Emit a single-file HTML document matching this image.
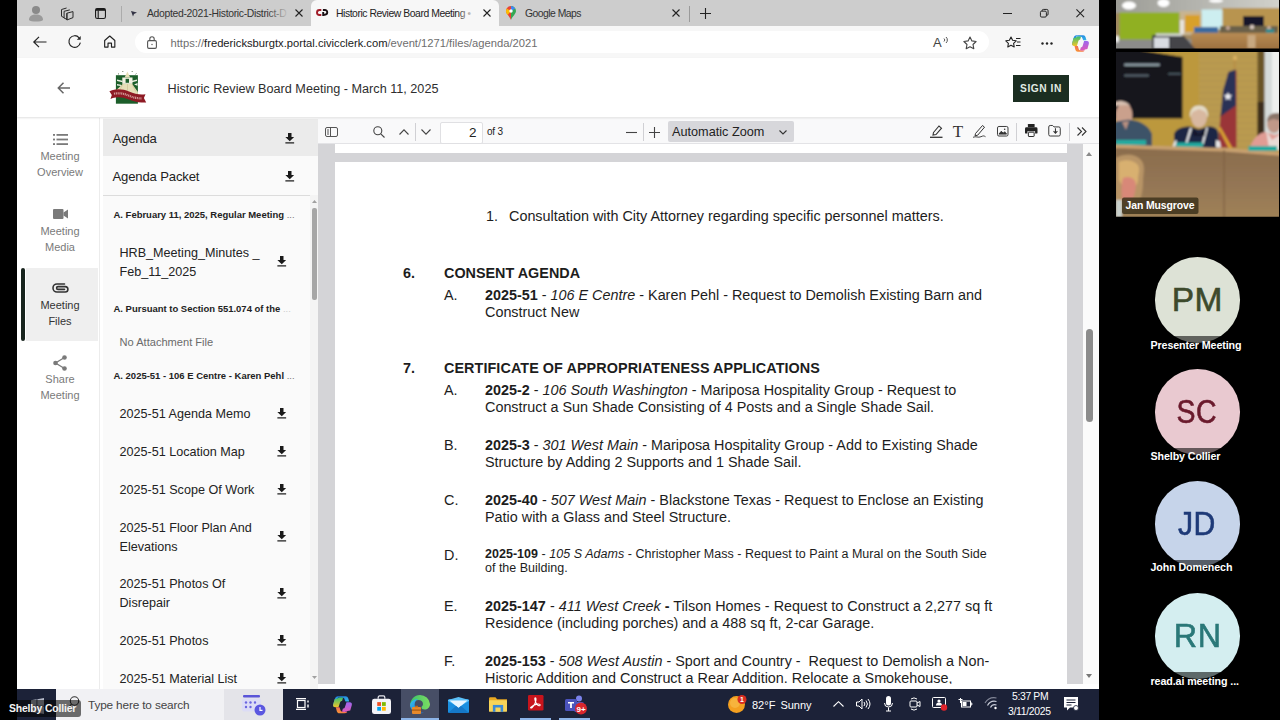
<!DOCTYPE html>
<html lang="en">
<head>
<meta charset="utf-8">
<title>Historic Review Board Meeting</title>
<style>
*{box-sizing:border-box;margin:0;padding:0}
html,body{width:1280px;height:720px;overflow:hidden;background:#000;font-family:"Liberation Sans",sans-serif;color:#222}
.abs{position:absolute}
#win{position:absolute;left:17px;top:0;width:1082px;height:690px;background:#fff;overflow:hidden}
#tabbar{position:absolute;left:0;top:0;width:1083px;height:26px;background:#cdcdcd}
#addr{position:absolute;left:0;top:26px;width:1083px;height:32px;background:#f7f7f7}
#hdr{position:absolute;left:0;top:58px;width:1083px;height:59px;background:#fff;box-shadow:0 1px 2px rgba(0,0,0,.13);z-index:2}
#nav{position:absolute;left:0;top:118px;width:86px;height:572px;background:#fff}
#files{position:absolute;left:86px;top:118px;width:215px;height:572px;background:#fafafa}
#pdf{position:absolute;left:301px;top:118px;width:782px;height:572px;background:#d4d4d7}
#task{position:absolute;left:17px;top:688.500px;width:1082px;height:31.500px;background:#1c2238;overflow:hidden}
.tk{position:absolute;color:#fff;white-space:nowrap;font-size:11px;line-height:14px}
#right{position:absolute;left:1100px;top:0;width:180px;height:720px;background:#000}
.t{position:absolute;white-space:nowrap}
.av{position:absolute;left:54.500px;width:85.500px;height:85.500px;border-radius:50%;text-align:center;font-size:33.5px;line-height:86px;-webkit-text-stroke:.6px;letter-spacing:.5px}
.avg{position:absolute;left:40px;width:120px;height:9px;background:rgba(0,0,0,.56)}
.av span{display:inline-block}
.avn{position:absolute;left:50.500px;color:#fff;font-weight:bold;font-size:10.7px;line-height:13px;white-space:nowrap;letter-spacing:-.1px}

.nv{position:absolute;left:0;width:86px;text-align:center;font-size:11px;line-height:16px;color:#7a7a7a}
#navact{position:absolute;left:9px;top:150px;width:72px;height:73px;background:#efefef}
#navbar{position:absolute;left:4px;top:150px;width:4px;height:73px;background:#18241e;border-radius:2px}
#navline{position:absolute;left:82px;top:0;width:1px;height:572px;background:#ececec}
.fr{position:absolute;left:9.500px;font-size:13.1px;letter-spacing:-.15px;line-height:18px;color:#222;white-space:nowrap}
.fh{position:absolute;left:10.500px;font-size:9.47px;line-height:12px;font-weight:bold;color:#222;white-space:nowrap}
.fi{position:absolute;left:16.500px;font-size:12.6px;line-height:19px;color:#222;white-space:nowrap}
.dl{width:9.500px;height:10.500px;margin:.9px 0 0 .6px}

.tabt{position:absolute;top:7px;font-size:10.4px;line-height:13px;letter-spacing:-.15px;color:#333;white-space:nowrap}
#acttab{position:absolute;left:294px;top:0;width:188px;height:26px;background:#f7f7f7;border-radius:6px 6px 0 0}
#urlpill{position:absolute;left:118px;top:4.500px;width:854px;height:22.700px;border-radius:12px;background:#fff}
#url{position:absolute;left:153.500px;top:9.800px;font-size:11.2px;line-height:15px;color:#6e6e6e;white-space:nowrap}
#url b{font-weight:normal;color:#1a1a1a}
svg{position:absolute;overflow:visible}
#title{position:absolute;left:150.500px;top:22.500px;font-size:12.65px;line-height:16px;color:#2e2e2e;white-space:nowrap}
#signin{position:absolute;left:996px;top:17px;width:56px;height:27px;background:#1b2e21;color:#e2ece4;font-weight:bold;font-size:10.2px;line-height:27px;text-align:center;letter-spacing:.55px}

#pdftb{position:absolute;left:0;top:0;width:782px;height:26px;background:#f9f9fa;border-bottom:1px solid #e3e3e6}
#pg{position:absolute;left:17px;top:43.500px;width:732px;height:540px;background:#fff}
#pgshadow{position:absolute;left:17px;top:26px;width:732px;height:9px;background:#fff}
#vscroll{position:absolute;left:765px;top:26px;width:17px;height:546px;background:#fbfbfb}
#vthumb{position:absolute;left:3px;top:185px;width:7px;height:93px;background:#8c8c8c;border-radius:4px}
.p{position:absolute;white-space:nowrap;font-size:14.38px;line-height:17px;color:#1d1d1d}
.p b{font-weight:bold}
.p.s{font-size:12.5px;line-height:15px}

</style>
</head>
<body>
<div id="win">
  <div id="tabbar">
    <!-- profile -->
    <svg style="left:11px;top:5px" width="16" height="18" viewBox="0 0 16 18"><circle cx="8" cy="5" r="4" fill="#8a8a8a"/><path d="M1 15c0-4 3-5.5 7-5.500s7 1.500 7 5.500c-1.500 2-12.500 2-14 0z" fill="#9a9a9a"/></svg>
    <!-- workspaces -->
    <svg style="left:43.500px;top:6.500px" width="13" height="14" viewBox="0 0 13 14" fill="none" stroke="#2a2a2a" stroke-width="1" stroke-linejoin="round"><path d="M5.900 6.200L12 4.600v6L5.900 13z"/><path d="M5.900 6.200L5.900 13"/><path d="M8.800 2.900L3.100 4.300v6.800l2.800 1.200"/><path d="M5.600 1L.5 2.500v6.800l2.600 1.400"/></svg>
    <!-- tab actions -->
    <svg style="left:77.700px;top:7.800px" width="11" height="11" viewBox="0 0 11 11" fill="none" stroke="#1a1a1a" stroke-width="1.100"><rect x=".55" y=".55" width="9.900" height="9.900" rx="1.800"/><path d="M.8 1.700h9.400" stroke-width="2.200"/><path d="M3.200 2.500v8"/></svg>
    <div style="position:absolute;left:104px;top:6px;width:1px;height:16px;background:#ababab"></div>
    <svg style="left:113px;top:9px" width="8" height="8" viewBox="0 0 8 8"><path d="M1 2l6 1.500-3 1.500-1 2.500z" fill="#334"/></svg>
    <div class="tabt" style="left:130px;letter-spacing:-.32px">Adopted-2021-Historic-District-D</div>
    <div style="position:absolute;left:250px;top:4px;width:22px;height:18px;background:linear-gradient(90deg,rgba(205,205,205,0),#cdcdcd)"></div>
    <svg style="left:278px;top:9px" width="8" height="8" viewBox="0 0 8 8" stroke="#222" stroke-width="1.100"><path d="M.5.500l7 7M7.500.500l-7 7"/></svg>
    <div id="acttab"></div>
    <!-- cp logo -->
    <svg style="left:298.700px;top:9.300px" width="12.300" height="7" viewBox="0 0 12.300 7" fill="none" stroke-width="1.900"><path d="M5.300 1H3.500a2.500 2.500 0 0 0 0 5h1.800" stroke="#a01c28"/><path d="M6.900 1h2a2.350 2.350 0 0 1 0 4.700h-1.500M7.200 3v4" stroke="#1a1014"/></svg>
    <div class="tabt" style="left:319px;color:#222;letter-spacing:-.45px">Historic Review Board Meeting &bull;</div>
    <div style="position:absolute;left:440px;top:4px;width:22px;height:18px;background:linear-gradient(90deg,rgba(247,247,247,0),#f7f7f7 80%)"></div>
    <svg style="left:466px;top:9px" width="8" height="8" viewBox="0 0 8 8" stroke="#222" stroke-width="1.100"><path d="M.5.500l7 7M7.500.500l-7 7"/></svg>
    <!-- google maps pin -->
    <svg style="left:489px;top:6px" width="10" height="14" viewBox="0 0 10 14"><path d="M5 0a5 5 0 0 1 5 5c0 3-3.500 5-5 9z" fill="#34a853"/><path d="M5 0a5 5 0 0 0-5 5c0 3 3.500 5 5 9z" fill="#ea4335"/><path d="M5 0a5 5 0 0 1 4.300 2.500L5 5z" fill="#4285f4"/><path d="M.7 2.500L5 5 1.500 9A6 6 0 0 1 .7 2.500z" fill="#fbbc04"/><circle cx="5" cy="5" r="1.700" fill="#fff"/></svg>
    <div class="tabt" style="left:508px;letter-spacing:-.53px">Google Maps</div>
    <svg style="left:655px;top:9px" width="8" height="8" viewBox="0 0 8 8" stroke="#222" stroke-width="1.100"><path d="M.5.500l7 7M7.500.500l-7 7"/></svg>
    <div style="position:absolute;left:672px;top:6px;width:1px;height:16px;background:#9a9a9a"></div>
    <svg style="left:683px;top:8px" width="11" height="11" viewBox="0 0 11 11" stroke="#222" stroke-width="1.100"><path d="M5.500 0v11M0 5.500h11"/></svg>
    <!-- window controls -->
    <svg style="left:985.500px;top:12.500px" width="9" height="1" viewBox="0 0 9 1"><path d="M0 .5h9" stroke="#222" stroke-width="1"/></svg>
    <svg style="left:1022.500px;top:9px" width="8.500" height="8.500" viewBox="0 0 10 10" fill="none" stroke="#222" stroke-width="1.150"><rect x=".5" y="2.500" width="7" height="7" rx="1.500"/><path d="M2.500 2.500V2a1.500 1.500 0 0 1 1.500-1.500h4A1.500 1.500 0 0 1 9.500 2v4A1.500 1.500 0 0 1 8 7.500h-.5"/></svg>
    <svg style="left:1058.800px;top:9px" width="8.500" height="8.500" viewBox="0 0 10 10" stroke="#222" stroke-width="1.250"><path d="M.5.500l9 9M9.500.500l-9 9"/></svg>
  </div>
  <div id="addr">
    <!-- back -->
    <svg style="left:16px;top:9.900px" width="14" height="12" viewBox="0 0 14 12" fill="none" stroke="#222" stroke-width="1.200"><path d="M13.500 6H1M6 .8L.8 6 6 11.200"/></svg>
    <!-- refresh -->
    <svg style="left:51px;top:9.100px" width="14" height="14" viewBox="0 0 14 14" fill="none" stroke="#222" stroke-width="1.150"><path d="M12.37 7.71A5.8 5.8 0 1 1 11.14 2.77"/><path d="M12.700 .9v3.900H8.800z" fill="#222" stroke="none"/></svg>
    <!-- home -->
    <svg style="left:87px;top:9.100px" width="11.500" height="13" viewBox="0 0 12 13" fill="none" stroke="#222" stroke-width="1.200" stroke-linejoin="round"><path d="M.7 5.500L6 .8l5.300 4.700v6.800H7.800V8.200H4.200v4.100H.7z"/></svg>
    <div id="urlpill"></div>
    <!-- lock -->
    <svg style="left:130px;top:9.7px" width="10" height="13" viewBox="0 0 10 13" fill="none" stroke="#555" stroke-width="1.100"><rect x=".6" y="4.600" width="8.800" height="7.800" rx="1.300"/><path d="M2.800 4.500V3a2.200 2.200 0 0 1 4.400 0v1.500"/><circle cx="5" cy="8.500" r=".7" fill="#555" stroke="none"/></svg>
    <div id="url">https://<b>fredericksburgtx.portal.civicclerk.com</b>/event/1271/files/agenda/2021</div>
    <!-- read aloud -->
    <div style="position:absolute;left:916px;top:8.700px;font-size:13px;line-height:16px;color:#444">A</div>
    <svg style="left:926px;top:9.7px" width="6" height="8" viewBox="0 0 6 8" fill="none" stroke="#444" stroke-width=".9"><path d="M1 2.500a2 2 0 0 1 0 3M3 1a4 4 0 0 1 0 6"/></svg>
    <!-- star -->
    <svg style="left:946px;top:9.7px" width="14" height="14" viewBox="0 0 14 14" fill="none" stroke="#444" stroke-width="1.100" stroke-linejoin="round"><path d="M7 1l1.900 3.900 4.200.6-3.100 3 .8 4.200L7 10.700l-3.800 2 .8-4.200-3.100-3 4.200-.6z"/></svg>
    <!-- favorites -->
    <svg style="left:988px;top:9.7px" width="16" height="14" viewBox="0 0 16 14" fill="none" stroke="#222" stroke-width="1.100" stroke-linejoin="round"><path d="M6 1l1.600 3.300 3.600.5-2.600 2.500.6 3.600L6 9.200l-3.200 1.700.6-3.600L.8 4.800l3.600-.5z"/><path d="M11 2.500h4.500M12 6h3.500M11 9.500h4.500"/></svg>
    <!-- dots -->
    <svg style="left:1024px;top:15.7px" width="12" height="3" viewBox="0 0 12 3" fill="#222"><circle cx="1.500" cy="1.500" r="1.200"/><circle cx="6" cy="1.500" r="1.200"/><circle cx="10.500" cy="1.500" r="1.200"/></svg>
    <!-- copilot -->
    <svg style="left:1055px;top:8.7px" width="17" height="17" viewBox="0 0 17 17"><defs><linearGradient id="cgA" x1="0" y1="0" x2="1" y2="1"><stop offset="0" stop-color="#1a78e0"/><stop offset="1" stop-color="#38b8e8"/></linearGradient><linearGradient id="cgB" x1="0" y1="0" x2="0" y2="1"><stop offset="0" stop-color="#38c070"/><stop offset="1" stop-color="#f0c428"/></linearGradient><linearGradient id="cgC" x1="0" y1="1" x2="1" y2="0"><stop offset="0" stop-color="#f8a028"/><stop offset="1" stop-color="#f04878"/></linearGradient><linearGradient id="cgD" x1="0" y1="0" x2="0" y2="1"><stop offset="0" stop-color="#9a68f0"/><stop offset="1" stop-color="#e058b8"/></linearGradient></defs>
      <path d="M4.200 1.500C4.800.7 5.600.3 6.600.3h4.600c1.300 0 2 .8 2.400 2l.9 3h-3.300l-1-2.500C9.900 2 9.400 1.700 8.600 1.700z" fill="url(#cgA)"/>
      <path d="M6.600.3C5.300.3 4.500 1.200 4.100 2.400L2 9.200C1.600 10.500 0 10.600 0 9l.1-.8L1.600 3C2 1.500 3 .3 4.600.3z" fill="url(#cgA)"/>
      <path d="M1.600 3L.2 8C-.3 9.800.6 10.900 2 10.900h2.900l1.400-4.600c.3-1 .9-1.500 1.800-1.500L9 1.700C8.400 1.700 5 1 4.100 2.400z" fill="url(#cgB)"/>
      <path d="M12.800 15.500c-.6.800-1.400 1.200-2.400 1.200H5.800c-1.300 0-2-.8-2.400-2l-.9-3.800h3.300l1 3.300c.3.800.8 1.100 1.600 1.100z" fill="url(#cgC)"/>
      <path d="M15.400 14l1.400-5c.5-1.800-.4-3-1.800-3h-2.900l-1.400 4.700c-.3 1-.9 1.500-1.800 1.500L8 15.300c.6 0 4 .7 4.900-.7z" fill="url(#cgD)"/>
    </svg>
  </div>
  <div id="hdr">
    <svg style="left:40px;top:24px" width="13" height="12" viewBox="0 0 13 12" fill="none" stroke="#666" stroke-width="1.500"><path d="M13 6H1.500M6.500 .8L1.300 6l5.200 5.200"/></svg>
    <!-- city logo -->
    <svg style="left:91px;top:8px" width="40" height="40" viewBox="0 0 40 40">
      <rect x="7.900" y="9.200" width="22" height="28.500" fill="#1c5e2a"/>
      <path d="M9 13.500l5.500 1.200v1.600L9 15zM29 13.500l-5 1.200v1.600l5-1.300zM9 18l4 .8v1.200l-4-.6zM29.500 17l-3.500 1.500 3.500 1.200z" fill="#eef0e4"/>
      <path d="M15.200 17.600h8.600l6.100 8.400v4.500l-22-4.500v-1.500z" fill="#e6dfb8"/>
      <path d="M19.500 17.600v9M15.200 17.600l-4 7.500M23.800 17.600l4 8" stroke="#c8bf90" stroke-width=".6" fill="none"/>
      <rect x="14.300" y="11.500" width="10.200" height="6.300" fill="#f2f0e2"/>
      <rect x="17.600" y="12.800" width="3.400" height="4" fill="#1c5e2a"/>
      <path d="M19.400 5.500l2.800 6h-5.600z" fill="#e6dfb8"/>
      <path d="M1.400 25.200l2.600-1c6-1.800 12-.8 17 1.300s10 3.400 14.500 3l2-.3-1.600 3.700 2.300 4.700-3-.2c-5 .4-10-1-15-3.100s-10.500-2.700-15.500-1.200l-2.200.800 1.300-3.900z" fill="#8e1a24"/>
      <path d="M6 27.800c5-1.200 10-.2 14.500 1.700s9 3 13 2.800" stroke="#e8c8c0" stroke-width="2.200" stroke-dasharray="1.100 .7" fill="none" opacity=".75"/>
      <path d="M10 7.500l1 .8M14.500 5l.6 1M24.500 5l-.6 1M28.500 7.500l-1 .8" stroke="#5a7050" stroke-width=".9"/>
    </svg>
    <div id="title">Historic Review Board Meeting - March 11, 2025</div>
    <div id="signin">SIGN IN</div>
  </div>
  <div id="nav">
    <div id="navact"></div><div id="navbar"></div><div id="navline"></div>
    <svg style="left:36px;top:16px" width="15" height="11" viewBox="0 0 15 11" fill="#7a7a7a"><rect x="0" y="0" width="2" height="1.800"/><rect x="3.500" y="0" width="11.500" height="1.800"/><rect x="0" y="4.600" width="2" height="1.800"/><rect x="3.500" y="4.600" width="11.500" height="1.800"/><rect x="0" y="9.200" width="2" height="1.800"/><rect x="3.500" y="9.200" width="11.500" height="1.800"/></svg>
    <div class="nv" style="top:30.0px">Meeting<br>Overview</div>
    <svg style="left:36px;top:91px" width="15" height="10" viewBox="0 0 15 10" fill="#7a7a7a"><rect x="0" y="0" width="10.500" height="10" rx="1"/><path d="M10.500 3.500L15 .5v9l-4.500-3z"/></svg>
    <div class="nv" style="top:104.5px">Meeting<br>Media</div>
    <svg style="left:35px;top:165px" width="17" height="10" viewBox="0 0 17 10" fill="none" stroke="#333" stroke-width="1.600" stroke-linecap="round"><path d="M12.500 1H5a4 4 0 0 0 0 8h8.200a2.700 2.700 0 0 0 0-5.400H6a1.400 1.400 0 0 0 0 2.800h6.500"/></svg>
    <div class="nv" style="top:179.0px;color:#333">Meeting<br>Files</div>
    <svg style="left:36px;top:237px" width="14" height="16" viewBox="0 0 14 16"><g fill="#7a7a7a"><circle cx="11.500" cy="2.500" r="2.300"/><circle cx="2.500" cy="8" r="2.300"/><circle cx="11.500" cy="13.500" r="2.300"/></g><path d="M11.500 2.500L2.500 8l9 5.500" fill="none" stroke="#7a7a7a" stroke-width="1.300"/></svg>
    <div class="nv" style="top:253.0px">Share<br>Meeting</div>
  </div>
  <div id="files">
    <div style="position:absolute;left:0;top:1px;width:215px;height:37px;background:#ebebeb"></div>
    <div class="fr" style="top:11.800px">Agenda</div><svg class="dl" style="left:181px;top:14.0px" viewBox="0 0 10 12" fill="#1a1a1a"><path d="M3 0h4v4.500h3L5 9.500 0 4.500h3z"/><rect x="0" y="10.600" width="10" height="1.400"/></svg>
    <div class="fr" style="top:49.800px">Agenda Packet</div><svg class="dl" style="left:181px;top:52.0px" viewBox="0 0 10 12" fill="#1a1a1a"><path d="M3 0h4v4.500h3L5 9.500 0 4.500h3z"/><rect x="0" y="10.600" width="10" height="1.400"/></svg>
    <div style="position:absolute;left:0;top:76.500px;width:208px;height:1px;background:#dcdcdc"></div>
    <div style="position:absolute;left:207px;top:77px;width:8px;height:495px;background:#f4f4f4"></div>
    <div style="position:absolute;left:208.500px;top:90px;width:5px;height:92px;background:#a6a6a6;border-radius:2px"></div><svg style="left:208.500px;top:82px" width="5" height="3" viewBox="0 0 5 3"><path d="M0 3l2.500-3 2.500 3z" fill="#a0a0a0"/></svg><svg style="left:208.500px;top:558px" width="5" height="3" viewBox="0 0 5 3"><path d="M0 0l2.500 3 2.500-3z" fill="#a0a0a0"/></svg>
    <div class="fh" style="top:90.5px">A. February 11, 2025, Regular Meeting <span style="font-weight:normal;color:#777">...</span></div>
    <div class="fi" style="top:125.5px">HRB_Meeting_Minutes _</div><div class="fi" style="top:144.7px">Feb_11_2025</div><svg class="dl" style="left:173px;top:137.5px" viewBox="0 0 10 12" fill="#1a1a1a"><path d="M3 0h4v4.500h3L5 9.500 0 4.500h3z"/><rect x="0" y="10.600" width="10" height="1.400"/></svg>
    <div class="fh" style="top:185.0px">A. Pursuant to Section 551.074 of the <span style="font-weight:normal;color:#ccc">...</span></div>
    <div class="fi" style="top:214.5px;color:#6a6a6a;font-size:11.1px">No Attachment File</div>
    <div class="fh" style="top:251.5px">A. 2025-51 - 106 E Centre - Karen Pehl <span style="font-weight:normal;color:#777">...</span></div>
    <div class="fi" style="top:286.8px">2025-51 Agenda Memo</div><svg class="dl" style="left:173px;top:289.0px" viewBox="0 0 10 12" fill="#1a1a1a"><path d="M3 0h4v4.500h3L5 9.500 0 4.500h3z"/><rect x="0" y="10.600" width="10" height="1.400"/></svg>
    <div class="fi" style="top:324.8px">2025-51 Location Map</div><svg class="dl" style="left:173px;top:327.0px" viewBox="0 0 10 12" fill="#1a1a1a"><path d="M3 0h4v4.500h3L5 9.500 0 4.500h3z"/><rect x="0" y="10.600" width="10" height="1.400"/></svg>
    <div class="fi" style="top:362.8px">2025-51 Scope Of Work</div><svg class="dl" style="left:173px;top:365.0px" viewBox="0 0 10 12" fill="#1a1a1a"><path d="M3 0h4v4.500h3L5 9.500 0 4.500h3z"/><rect x="0" y="10.600" width="10" height="1.400"/></svg>
    <div class="fi" style="top:400.8px">2025-51 Floor Plan And</div><div class="fi" style="top:419.8px">Elevations</div><svg class="dl" style="left:173px;top:412.0px" viewBox="0 0 10 12" fill="#1a1a1a"><path d="M3 0h4v4.500h3L5 9.500 0 4.500h3z"/><rect x="0" y="10.600" width="10" height="1.400"/></svg>
    <div class="fi" style="top:457.3px">2025-51 Photos Of</div><div class="fi" style="top:476.3px">Disrepair</div><svg class="dl" style="left:173px;top:469.0px" viewBox="0 0 10 12" fill="#1a1a1a"><path d="M3 0h4v4.500h3L5 9.500 0 4.500h3z"/><rect x="0" y="10.600" width="10" height="1.400"/></svg>
    <div class="fi" style="top:514.3px">2025-51 Photos</div><svg class="dl" style="left:173px;top:516.0px" viewBox="0 0 10 12" fill="#1a1a1a"><path d="M3 0h4v4.500h3L5 9.500 0 4.500h3z"/><rect x="0" y="10.600" width="10" height="1.400"/></svg>
    <div class="fi" style="top:552.4px">2025-51 Material List</div><svg class="dl" style="left:173px;top:554.0px" viewBox="0 0 10 12" fill="#1a1a1a"><path d="M3 0h4v4.500h3L5 9.500 0 4.500h3z"/><rect x="0" y="10.600" width="10" height="1.400"/></svg>
  </div>
  <div id="pdf">
    <div id="pgshadow"></div>
    <div id="pg">
      <div class="p " id="l0" style="left:151px;top:46.9px">1.</div>
      <div class="p " id="l1" style="left:174px;top:46.9px">Consultation with City Attorney regarding specific personnel matters.</div>
      <div class="p " id="l2" style="left:68px;top:103.4px"><b>6.</b></div>
      <div class="p " id="l3" style="left:109px;top:103.4px"><b>CONSENT AGENDA</b></div>
      <div class="p " id="l4" style="left:109px;top:125.4px">A.</div>
      <div class="p " id="l5" style="left:150px;top:125.4px"><b>2025-51</b> - <i>106 E Centre</i> - Karen Pehl - Request to Demolish Existing Barn and</div>
      <div class="p " id="l6" style="left:150px;top:142.4px">Construct New</div>
      <div class="p " id="l7" style="left:68px;top:198.4px"><b>7.</b></div>
      <div class="p " id="l8" style="left:109px;top:198.4px"><b style="letter-spacing:.075px">CERTIFICATE OF APPROPRIATENESS APPLICATIONS</b></div>
      <div class="p " id="l9" style="left:109px;top:220.4px">A.</div>
      <div class="p " id="l10" style="left:150px;top:220.4px"><b>2025-2</b> - <i>106 South Washington</i> - Mariposa Hospitality Group - Request to</div>
      <div class="p " id="l11" style="left:150px;top:237.4px">Construct a Sun Shade Consisting of 4 Posts and a Single Shade Sail.</div>
      <div class="p " id="l12" style="left:109px;top:275.4px">B.</div>
      <div class="p " id="l13" style="left:150px;top:275.4px"><b>2025-3</b> - <i>301 West Main</i> - Mariposa Hospitality Group - Add to Existing Shade</div>
      <div class="p " id="l14" style="left:150px;top:292.4px">Structure by Adding 2 Supports and 1 Shade Sail.</div>
      <div class="p " id="l15" style="left:109px;top:330.4px">C.</div>
      <div class="p " id="l16" style="letter-spacing:.015px;left:150px;top:330.4px"><b>2025-40</b> - <i>507 West Main</i> - Blackstone Texas - Request to Enclose an Existing</div>
      <div class="p " id="l17" style="left:150px;top:347.4px">Patio with a Glass and Steel Structure.</div>
      <div class="p " id="l18" style="left:109px;top:385.4px">D.</div>
      <div class="p s" id="l19" style="letter-spacing:.03px;left:150px;top:385.6px"><b>2025-109</b> - <i>105 S Adams</i> - Christopher Mass - Request to Paint a Mural on the South Side</div>
      <div class="p s" id="l20" style="left:150px;top:399.6px">of the Building.</div>
      <div class="p " id="l21" style="left:109px;top:436.4px">E.</div>
      <div class="p " id="l22" style="letter-spacing:.017px;left:150px;top:436.4px"><b>2025-147</b> - <i>411 West Creek</i> <b>-</b> Tilson Homes - Request to Construct a 2,277 sq ft</div>
      <div class="p " id="l23" style="left:150px;top:453.4px">Residence (including porches) and a 488 sq ft, 2-car Garage.</div>
      <div class="p " id="l24" style="left:109px;top:491.0px">F.</div>
      <div class="p " id="l25" style="left:150px;top:491.0px"><b>2025-153</b> - <i>508 West Austin</i> - Sport and Country - &nbsp;Request to Demolish a Non-</div>
      <div class="p " id="l26" style="left:150px;top:508.0px">Historic Addition and Construct a Rear Addition. Relocate a Smokehouse,</div>
    </div>
    <div id="vscroll"><div id="vthumb"></div><svg style="left:3px;top:8px" width="6" height="4" viewBox="0 0 6 4"><path d="M0 4l3-4 3 4z" fill="#8a8a8a"/></svg><svg style="left:3px;top:530px" width="6" height="4" viewBox="0 0 6 4"><path d="M0 0l3 4 3-4z" fill="#777"/></svg></div>
    <div style="position:absolute;left:0;top:566px;width:782px;height:6px;background:#fff"></div>
    <div id="pdftb">
      <!-- sidebar toggle -->
      <svg style="left:7px;top:9px" width="13" height="10" viewBox="0 0 13 10" fill="none" stroke="#555" stroke-width="1"><rect x=".5" y=".5" width="12" height="9" rx="1.500"/><path d="M5.500 .5v9M2 3h2M2 5h2M2 7h2" /></svg>
      <!-- search -->
      <svg style="left:55px;top:8px" width="12" height="12" viewBox="0 0 12 12" fill="none" stroke="#444" stroke-width="1.100"><circle cx="4.800" cy="4.800" r="4"/><path d="M7.800 7.800l3.700 3.700"/></svg>
      <svg style="left:80.500px;top:11px" width="10" height="6" viewBox="0 0 10 6" fill="none" stroke="#444" stroke-width="1.100"><path d="M.5 5.500L5 .8l4.500 4.700"/></svg>
      <div style="position:absolute;left:96.500px;top:5px;width:1px;height:18px;background:#d0d0d4"></div>
      <svg style="left:103px;top:11px" width="10" height="6" viewBox="0 0 10 6" fill="none" stroke="#444" stroke-width="1.100"><path d="M.5 .5L5 5.200 9.500 .5"/></svg>
      <div style="position:absolute;left:121.500px;top:3.500px;width:43px;height:22px;background:#fff;border:1px solid #e0e0e3;border-radius:2px"></div>
      <div style="position:absolute;left:121.500px;top:6.500px;width:37px;text-align:right;font-size:13.5px;line-height:16px;color:#222">2</div>
      <div style="position:absolute;left:169px;top:7px;font-size:10px;letter-spacing:-.2px;line-height:13px;color:#222">of 3</div>
      <!-- minus / plus -->
      <svg style="left:308px;top:13.500px" width="11" height="1" viewBox="0 0 11 1"><path d="M0 .5h11" stroke="#444" stroke-width="1.100"/></svg>
      <div style="position:absolute;left:324.500px;top:5px;width:1px;height:18px;background:#d0d0d4"></div>
      <svg style="left:330.500px;top:8.500px" width="11" height="11" viewBox="0 0 11 11" stroke="#444" stroke-width="1.100"><path d="M5.500 0v11M0 5.500h11"/></svg>
      <div style="position:absolute;left:349.500px;top:3px;width:126px;height:21px;background:#d7d7db;border-radius:2px"></div>
      <div style="position:absolute;left:354px;top:5.500px;font-size:12.7px;line-height:16px;color:#222;white-space:nowrap">Automatic Zoom</div>
      <svg style="left:461px;top:11.500px" width="8" height="5" viewBox="0 0 8 5" fill="none" stroke="#333" stroke-width="1.100"><path d="M.5 .5L4 4l3.500-3.500"/></svg>
      <!-- highlight -->
      <svg style="left:612px;top:6px" width="13" height="14" viewBox="0 0 13 14" fill="none" stroke="#333" stroke-width="1.100"><path d="M3.500 8.500L9 2l2.500 2.200L6 10.500l-3 .5z"/><path d="M0 13.300h12.500" stroke-width="1.300"/></svg>
      <!-- T -->
      <div style="position:absolute;left:633px;top:4px;width:14px;text-align:center;font-family:'Liberation Serif',serif;font-size:17px;line-height:20px;color:#333">T</div>
      <!-- pencil -->
      <svg style="left:655px;top:6px" width="13" height="14" viewBox="0 0 13 14" fill="none" stroke="#333" stroke-width="1"><path d="M2.500 9.500L9.500 1.500l2 1.700L4.700 11.200l-2.700.6z"/><path d="M0 13.300c3-1.500 5 .8 8-.6s3-.7 4.500 0" stroke-width=".9"/></svg>
      <!-- image -->
      <svg style="left:678.500px;top:7.800px" width="11.500" height="10.500" viewBox="0 0 12 11" fill="none" stroke="#333" stroke-width="1"><rect x=".5" y=".5" width="11" height="10" rx="1.500"/><path d="M2 8.500l2.500-3 2 2 1.500-1.500 2 2.500z" fill="#333"/><circle cx="8" cy="3.500" r=".8" fill="#333" stroke="none"/></svg>
      <div style="position:absolute;left:698px;top:5px;width:1px;height:18px;background:#d0d0d4"></div>
      <!-- print -->
      <svg style="left:706.500px;top:6.300px" width="12.500" height="12.500" viewBox="0 0 13 13" fill="#222"><rect x="3" y="0" width="7" height="3.500" rx=".6"/><path d="M1.500 3.500h10A1.500 1.500 0 0 1 13 5v4a1 1 0 0 1-1 1h-1.500V7.500h-8V10H1a1 1 0 0 1-1-1V5a1.500 1.500 0 0 1 1.500-1.500z"/><rect x="3.500" y="8.500" width="6" height="4.500" rx=".5" fill="none" stroke="#222" stroke-width="1"/></svg>
      <!-- download folder -->
      <svg style="left:730px;top:7px" width="13" height="11.500" viewBox="0 0 13 12" fill="none" stroke="#333" stroke-width="1"><path d="M.5 2a1.500 1.500 0 0 1 1.500-1.500h2.500L6 2h5a1.500 1.500 0 0 1 1.500 1.500V10a1.500 1.500 0 0 1-1.500 1.500H2A1.500 1.500 0 0 1 .5 10z"/><path d="M7.500 3.500v5M5.500 6.500l2 2 2-2" stroke-width="1.100"/></svg>
      <div style="position:absolute;left:750.500px;top:5px;width:1px;height:18px;background:#d0d0d4"></div>
      <svg style="left:759px;top:9px" width="10" height="9" viewBox="0 0 10 9" fill="none" stroke="#333" stroke-width="1.100"><path d="M.5 .5l4 4-4 4M5 .5l4 4-4 4"/></svg>
    </div>
  </div>
</div>
<div id="task">
  <!-- start -->
  <svg style="left:14px;top:9.500px" width="13" height="16" viewBox="0 0 14 14" preserveAspectRatio="none" fill="#b4b8c6"><path d="M0 2l6-.9v5.600H0zM6.800 1L14 0v6.700H6.800zM0 7.500h6v5.600L0 12.200zM6.800 7.500H14V14l-7.200-1z"/></svg>
  <!-- search box -->
  <div style="position:absolute;left:39px;top:0;width:227px;height:32px;background:#f1f1f4"></div>
  <div style="position:absolute;left:207px;top:0;width:59px;height:32px;background:#e4e4e9"></div>
  <svg style="left:51px;top:7px" width="12" height="12" viewBox="0 0 12 12" fill="none" stroke="#333" stroke-width="1.100"><circle cx="6.500" cy="5" r="4.200"/><path d="M3.500 8L.5 11.500"/></svg>
  <div class="tk" style="left:71px;top:9px;color:#444;font-size:11.8px;letter-spacing:-.15px">Type here to search</div>
  <!-- calendar widget -->
  <svg style="left:225px;top:6px" width="24" height="21" viewBox="0 0 24 21"><rect x="1" y="0" width="17" height="2.500" rx="1" fill="#5a55d8"/><rect x="0" y="3.500" width="19" height="13" rx="2" fill="#dcdcf6"/><g fill="#6b66e0"><circle cx="4" cy="7.500" r="1.200"/><circle cx="8.500" cy="7.500" r="1.200"/><circle cx="13" cy="7.500" r="1.200"/><circle cx="4" cy="12" r="1.200"/><circle cx="8.500" cy="12" r="1.200"/></g><circle cx="18" cy="15" r="5.500" fill="#5b57e0"/><path d="M18 12v3.300h2.500" fill="none" stroke="#fff" stroke-width="1.200"/></svg>
  <!-- task view -->
  <svg style="left:279px;top:9px" width="14" height="12" viewBox="0 0 14 12" fill="none" stroke="#fff" stroke-width="1.200"><rect x="1.500" y="2.500" width="7.500" height="7"/><path d="M0 .6h10M0 11.400h10"/><path d="M12 2.500v2M12 6.500v3" stroke-width="1.400"/></svg>
  <!-- copilot -->
  <svg style="left:316px;top:7.500px" width="19" height="17.500" viewBox="0 0 17 17" preserveAspectRatio="none">
      <path d="M4.200 1.500C4.800.7 5.600.3 6.600.3h4.600c1.300 0 2 .8 2.400 2l.9 3h-3.300l-1-2.500C9.900 2 9.400 1.700 8.600 1.700z" fill="url(#cgA)"/>
      <path d="M6.600.3C5.300.3 4.500 1.200 4.100 2.400L2 9.200C1.600 10.500 0 10.600 0 9l.1-.8L1.600 3C2 1.500 3 .3 4.600.3z" fill="url(#cgA)"/>
      <path d="M1.600 3L.2 8C-.3 9.800.6 10.900 2 10.900h2.900l1.400-4.600c.3-1 .9-1.500 1.800-1.500L9 1.700C8.400 1.700 5 1 4.100 2.400z" fill="url(#cgB)"/>
      <path d="M12.800 15.500c-.6.800-1.400 1.200-2.400 1.200H5.800c-1.300 0-2-.8-2.400-2l-.9-3.800h3.300l1 3.300c.3.800.8 1.100 1.600 1.100z" fill="url(#cgC)"/>
      <path d="M15.400 14l1.400-5c.5-1.800-.4-3-1.800-3h-2.900l-1.400 4.700c-.3 1-.9 1.500-1.800 1.500L8 15.300c.6 0 4 .7 4.900-.7z" fill="url(#cgD)"/>
  </svg>
  <!-- store -->
  <svg style="left:354.500px;top:6.500px" width="19" height="19" viewBox="0 0 20 20"><path d="M6.500 4V2.500A1.500 1.500 0 0 1 8 1h4a1.500 1.500 0 0 1 1.500 1.500V4" fill="none" stroke="#e8e8ee" stroke-width="1.300"/><rect x="0" y="4" width="20" height="16" rx="2.500" fill="#f4f4f8"/><rect x="5.500" y="7.500" width="4" height="4" fill="#f25022"/><rect x="10.500" y="7.500" width="4" height="4" fill="#7fba00"/><rect x="5.500" y="12.500" width="4" height="4" fill="#00a4ef"/><rect x="10.500" y="12.500" width="4" height="4" fill="#ffb900"/></svg>
  <!-- edge active -->
  <div style="position:absolute;left:384px;top:0;width:38px;height:31px;background:#474e66"></div>
  <div style="position:absolute;left:384px;top:29px;width:38px;height:2px;background:#8db4e8"></div>
  <svg style="left:392px;top:5px" width="22" height="22" viewBox="0 0 22 22"><defs><linearGradient id="eg1" x1="0" y1="0" x2="1" y2="1"><stop offset="0" stop-color="#35c1f1"/><stop offset="1" stop-color="#1b6fd0"/></linearGradient><linearGradient id="eg2" x1="0" y1="0" x2="1" y2="0"><stop offset="0" stop-color="#3ac26a"/><stop offset="1" stop-color="#7ddc62"/></linearGradient></defs><path d="M11 1a10 10 0 0 1 10 9c0 3.500-2.500 5.500-5.500 5.500-2 0-3-1-3-2 0-1.500 1.500-1.500 1.500-3.500C14 7.500 12 6 9.500 6 5.500 6 2 9 1 12 1 5.500 5.500 1 11 1z" fill="url(#eg2)"/><path d="M1 12c0-4 3.500-7 8-7-3 1.500-4 4.500-3 8 1 3.500 4.500 6 9 5.500A10 10 0 0 1 1 12z" fill="url(#eg1)"/><rect x="3" y="13" width="9" height="7" rx="1" fill="#e8892a"/><rect x="3" y="15.500" width="9" height="1.200" fill="#a85a12"/><rect x="6" y="11.800" width="3" height="1.500" fill="#c06a18"/></svg>
  <!-- mail -->
  <svg style="left:431px;top:8px" width="21" height="16" viewBox="0 0 21 16"><rect x="0" y="2" width="21" height="14" rx="1.500" fill="#1a8fe0"/><path d="M0 3l10.500-3L21 3v1L10.500 10 0 4z" fill="#5cc0f8"/><path d="M1.500 3.500h18L10.500 11z" fill="#e8f6ff"/><path d="M0 16l8-7 2.500 2 2.500-2 8 7z" fill="#1578c8"/></svg>
  <!-- explorer -->
  <svg style="left:471.500px;top:8px" width="18" height="15" viewBox="0 0 21 17"><path d="M0 1.500A1.500 1.500 0 0 1 1.500 0h6l2 2.500H21V6H0z" fill="#e8a822"/><rect x="0" y="3.500" width="21" height="13.500" rx="1" fill="#f8d458"/><rect x="4.500" y="9" width="12" height="8" fill="#3a8ad8"/><rect x="7.500" y="12" width="6" height="5" fill="#f8d458"/></svg>
  <!-- acrobat -->
  <div style="position:absolute;left:503px;top:29px;width:31px;height:2px;background:#8db4e8"></div>
  <svg style="left:510.500px;top:6.500px" width="15.500" height="15.500" viewBox="0 0 17 17"><rect width="17" height="17" rx="1.500" fill="#c8141c"/><path d="M3 13.500c1.500-1.500 4-3 7-3.500s4 .8 3 1.500c-1.500 1-5-2-5.500-7-.2-2 1.300-2 1.300 0 0 3-2.500 7.500-4.300 9.300-.8.800-2.200.4-1.500-.3z" fill="none" stroke="#fff" stroke-width="1.200"/></svg>
  <!-- teams -->
  <div style="position:absolute;left:542px;top:29px;width:31px;height:2px;background:#8db4e8"></div>
  <svg style="left:547px;top:5px" width="24" height="22" viewBox="0 0 24 22"><circle cx="15" cy="4.500" r="3" fill="#7b83eb"/><rect x="10" y="8" width="10" height="10" rx="2" fill="#5059c9"/><rect x="1" y="5" width="12" height="12" rx="1.500" fill="#4b53bc"/><path d="M4 8h6v1.600H7.900V14H6.100V9.600H4z" fill="#fff"/><circle cx="17" cy="14.500" r="6" fill="#d8262c"/><text x="17" y="17.500" text-anchor="middle" font-family="Liberation Sans, sans-serif" font-size="8" font-weight="bold" fill="#fff">9+</text></svg>
  <!-- weather -->
  <svg style="left:711px;top:6px" width="19" height="18" viewBox="0 0 19 18"><circle cx="8.500" cy="9.500" r="8.500" fill="#f4a020"/><circle cx="7" cy="8" r="5" fill="#f8bc48" opacity=".7"/><circle cx="14" cy="4.500" r="4.500" fill="#d82c20"/><text x="14" y="7.300" text-anchor="middle" font-family="Liberation Sans, sans-serif" font-size="7" font-weight="bold" fill="#fff">1</text></svg>
  <div class="tk" style="left:735px;top:9px;font-size:11px;word-spacing:2px">82&deg;F Sunny</div>
  <!-- tray -->
  <svg style="left:816px;top:12px" width="11" height="6" viewBox="0 0 11 6" fill="none" stroke="#fff" stroke-width="1.100"><path d="M.5 5.500L5.500 .7l5 4.800"/></svg>
  <svg style="left:839px;top:9px" width="14" height="12" viewBox="0 0 14 12" fill="none" stroke="#fff" stroke-width="1"><path d="M.5 4h2.500L6 1v10L3 8H.5z"/><path d="M8 4a3 3 0 0 1 0 4M10 2.500a5.500 5.500 0 0 1 0 7M12 1a8 8 0 0 1 0 10"/></svg>
  <svg style="left:867px;top:7px" width="9" height="16" viewBox="0 0 9 16"><rect x="2" y="0" width="5" height="9.500" rx="2.500" fill="#fff"/><path d="M.5 7a4 4 0 0 0 8 0M4.500 11.500V15M2 15h5" fill="none" stroke="#fff" stroke-width="1"/></svg>
  <svg style="left:892px;top:8px" width="12" height="14" viewBox="0 0 12 14" fill="none" stroke="#fff" stroke-width="1"><rect x="1" y="4" width="7" height="6" rx="1"/><path d="M8 6l3-1.500v5L8 8"/><path d="M2 2a5 5 0 0 1 6 0M2 12a5 5 0 0 0 6 0"/></svg>
  <svg style="left:915px;top:8px" width="16" height="14" viewBox="0 0 16 14"><rect x=".5" y=".5" width="13" height="10" rx="1" fill="none" stroke="#fff" stroke-width="1"/><circle cx="7" cy="4" r="1.600" fill="#fff"/><path d="M4 8.500a3 3 0 0 1 6 0z" fill="#fff"/><circle cx="12" cy="10.500" r="3.200" fill="#e0242c"/></svg>
  <svg style="left:941px;top:9px" width="14" height="11" viewBox="0 0 14 11" fill="none" stroke="#fff" stroke-width="1"><rect x="3.500" y="3" width="9" height="6"/><path d="M12.500 5h1.300v2h-1.300"/><path d="M.5 1.500h4M2.500 0v5"/><rect x="4.500" y="4" width="4" height="4" fill="#fff" stroke="none"/></svg>
  <svg style="left:967px;top:8px" width="14" height="13" viewBox="0 0 14 13" fill="none" stroke="#c8ccd8" stroke-width="1.200"><path d="M1 6A11 11 0 0 1 12.500 1" opacity=".6"/><path d="M3.500 8.500A8 8 0 0 1 12.500 4.500"/><path d="M6.500 10.500a5 5 0 0 1 6-2.500"/><circle cx="11.500" cy="11" r="1.200" fill="#fff" stroke="none"/></svg>
  <div class="tk" style="left:995px;top:1.500px;font-size:10.4px;letter-spacing:-.35px">5:37 PM</div>
  <div class="tk" style="left:991px;top:16px;font-size:10.4px;letter-spacing:-.3px">3/11/2025</div>
  <svg style="left:1047px;top:8px" width="15" height="15" viewBox="0 0 15 15"><path d="M0 0h14v10.500H6l-3 3v-3H0z" fill="#fff"/><path d="M2.500 3h9M2.500 5.500h9M2.500 8h5" stroke="#1c2238" stroke-width="1"/><circle cx="12" cy="11" r="2.500" fill="#fff" stroke="#1c2238" stroke-width=".8"/></svg>
</div>
<div id="right">
  <svg id="vid1" style="left:16px;top:0" width="163" height="48.500" viewBox="0 0 163 48.500">
    <defs><filter id="bl" x="-5%" y="-5%" width="110%" height="110%"><feGaussianBlur stdDeviation=".9"/></filter>
    <linearGradient id="ceil" x1="0" y1="0" x2="1" y2="0"><stop offset="0" stop-color="#9c9c96"/><stop offset=".5" stop-color="#b4b4ae"/><stop offset="1" stop-color="#d2d2cc"/></linearGradient>
    <linearGradient id="dsk1" x1="0" y1="0" x2="0" y2="1"><stop offset="0" stop-color="#b88c54"/><stop offset="1" stop-color="#9a6e3e"/></linearGradient>
    <clipPath id="c1"><rect width="163" height="48.500"/></clipPath></defs>
    <g clip-path="url(#c1)"><g filter="url(#bl)">
    <rect x="-2" y="-2" width="167" height="53" fill="#a08860"/>
    <rect x="-2" y="-2" width="167" height="15" fill="url(#ceil)"/>
    <ellipse cx="13" cy="5.500" rx="7" ry="4" fill="#fff"/><ellipse cx="47.500" cy="3" rx="6" ry="4" fill="#fff"/><ellipse cx="100" cy=".8" rx="7" ry="1.800" fill="#fff"/>
    <rect x="3.500" y="12.500" width="60" height="27.500" fill="#90b020"/>
    <rect x="63.500" y="11" width="22" height="24" fill="#c8b490"/>
    <rect x="69" y="15" width="15" height="17" fill="#d8a02c"/>
    <rect x="64" y="20" width="4" height="14" fill="#e8e4dc"/>
    <rect x="106" y="8" width="60" height="26" fill="#b89450"/>
    <rect x="85.500" y="9.500" width="21" height="20" fill="#cdeef0"/>
    <rect x="127" y="16" width="21" height="12.500" fill="#16162a"/>
    <rect x="78" y="27" width="24" height="6" fill="#3a6aa0"/>
    <rect x="104" y="26" width="58" height="7" fill="#6a6048"/>
    <circle cx="136" cy="27" r="2.200" fill="#d8c8c0"/><circle cx="112" cy="28" r="2" fill="#c8a898"/><circle cx="153" cy="28" r="2" fill="#d0b0a0"/>
    <rect x="150" y="29" width="8" height="4" fill="#208a90"/>
    <rect x="-2" y="39.500" width="80" height="12" fill="#8c8c8a"/>
    <rect x="75.500" y="32.800" width="92" height="18" fill="url(#dsk1)"/>
    <rect x="131.500" y="35" width="8" height="13" fill="#c8a880"/>
    <path d="M54 36h14l12 14H54z" fill="#44444a"/>
    <rect x="36" y="35" width="19" height="14" fill="#3a3a40"/>
    <rect x="38" y="37.500" width="15" height="11" fill="#d8dce2"/>
    <rect x="40" y="33.500" width="26" height="2.500" fill="#d0d4d0"/>
    <ellipse cx="1" cy="39" rx="2" ry="3.500" fill="#f0f0f0"/>
    </g></g>
  </svg>
  <svg id="vid2" style="left:16px;top:52px" width="163" height="164.700" viewBox="0 0 163 164.700">
    <defs><linearGradient id="dsk2" x1="0" y1="0" x2="0" y2="1"><stop offset="0" stop-color="#8a6c4c"/><stop offset=".5" stop-color="#937554"/><stop offset="1" stop-color="#a08258"/></linearGradient>
    <pattern id="blinds" width="4" height="2.400" patternUnits="userSpaceOnUse"><rect width="4" height="2.400" fill="#c0a054"/><rect y="1.600" width="4" height=".8" fill="#a88a44"/></pattern>
    <clipPath id="c2"><rect width="163" height="164.700"/></clipPath></defs>
    <g clip-path="url(#c2)"><g filter="url(#bl)">
    <rect x="-2" y="-2" width="167" height="169" fill="#bc983e"/>
    <rect x="83" y="-2" width="59" height="100" fill="url(#blinds)"/>
    <rect x="141.500" y="-2" width="7.500" height="100" fill="#6a5428"/><rect x="141.500" y="50" width="7.500" height="48" fill="#3e2e1a"/>
    <rect x="148.500" y="-2" width="17" height="100" fill="#d6dcda"/>
    <rect x="156" y="-2" width="9" height="70" fill="#eef0ee"/>
    <path d="M-2 -2h25l43.500 7v61.500h-68.500z" fill="#15131e"/>
    <rect x="8" y="11.500" width="36" height="2.400" rx="1.200" fill="#8a9aa0"/><rect x="8" y="22.500" width="25" height="2" rx="1" fill="#5a6870"/><rect x="52" y="21" width="13" height="1.800" rx=".9" fill="#4a5860"/>
    <rect x="117.500" y="5" width="2.500" height="45" fill="#b89048"/><circle cx="119" cy="6" r="2.200" fill="#d8b060"/>
    <path d="M112 21l8.500-2.500v77h-18.500l2.500-32z" fill="#9a3438"/>
    <path d="M112.500 20l7-2.500.5 36-15.500 11 2.500-26z" fill="#2a3256"/>
    <path d="M112 40l1.200 3 3 .2-2.300 2 .8 3-2.700-1.600-2.600 1.700.7-3-2.400-2 3.100-.3z" fill="#f0f0f4"/>
    <path d="M102 76l2.500-1 12 21h-4z" fill="#d8a030"/>
    <ellipse cx="8" cy="63" rx="8.500" ry="12" fill="#caa08c"/>
    <path d="M-2 51a10 8 0 0 1 16 3l-4-1-12 1z" fill="#d8c0b0"/>
    <path d="M-2 70l12-2c10-1 22 4 26 14v14h-38z" fill="#3c5268"/>
    <path d="M6 70l4 8 3-9z" fill="#b89080"/>
    <ellipse cx="83" cy="65" rx="8" ry="10.500" fill="#d8b8a0"/>
    <path d="M74 66c-1-8 3-12.500 9-12.500s10 4.500 9 12.500l-2.500-6-6.500-3-6.500 3z" fill="#e4dcc8"/>
    <path d="M58 82c2-6 10-7.500 16-7.500l9 3 9-3c6 0 10 1.500 10.500 7.500v14h-44.500z" fill="#1e2644"/>
    <path d="M74 75.500l-5 17h2l5-16zM92 75.500l-4.500 17h-2l4.500-17z" fill="#f0f0f0"/>
    <path d="M76 76l7 6 7-6-1.500 8h-11z" fill="#16182c"/>
    <path d="M56 96l3-8 2 1-2 7zM100 88l4 1.500 1 6h-5z" fill="#e8e8e8"/>
    <ellipse cx="158" cy="72" rx="7" ry="9" fill="#c09888"/>
    <path d="M151 70c0-6 4-9 9-9h5v8l-7-2-4 1z" fill="#8a7468"/>
    <path d="M134 96c2-8 8-15 15-16l10 3 6-2v15z" fill="#e09c94"/>
    <path d="M150 78l6 10 9-6v14h-12z" fill="#eadad6"/>
    <rect x="0" y="88" width="30" height="5" fill="#22aaa0"/>
    <rect x="60" y="90.500" width="27" height="5" fill="#22aaa0"/>
    <path d="M-2 93l110 3.500 58 4.500v66h-168z" fill="url(#dsk2)"/>
    <path d="M-2 92.500l110 3.500 58 4.500v3.500l-58-4.500-110-3.500z" fill="#c8a070"/>
    <rect x="132.500" y="94" width="28.500" height="5" fill="#22aaa0"/>
    <rect x="107.500" y="98" width="1.200" height="68" fill="#7e6040"/>
    <path d="M0 106c8-5 20-4 25 2s2 14 2 22-2 18-6 24-14 6-21 2z" fill="#b89466"/>
    <path d="M3 110c6-3 14-2 18 2s1 10 1 16-5 8-10 8-7-4-9-8z" fill="#d8b070"/>
    <path d="M7 126c4-2 10-1 12 3s0 12-2 18-8 6-10 2-2-18 0-23z" fill="#d88878"/>
    <rect x="0" y="148" width="6" height="17" fill="#c8d0cc"/>
    </g>
    <rect x="6" y="145.500" width="76.500" height="16.500" rx="2" fill="#40341e" opacity=".88"/>
    </g>
  </svg>
  <div style="position:absolute;left:25.500px;top:199px;color:#fff;font-weight:bold;font-size:10.45px;line-height:13px;white-space:nowrap;letter-spacing:-.1px">Jan Musgrove</div>
  <div class="av" style="top:257px;background:#dde2d6;color:#3d4a2c">PM</div>
  <div class="avg" style="top:336.3px"></div><div class="avn" style="top:338.5px">Presenter Meeting</div>
  <div class="av" style="top:369px;background:#e9c9d0;color:#6a1a2c"><span style="transform:scaleX(.85)">SC</span></div>
  <div class="avg" style="top:448.3px"></div><div class="avn" style="top:449.800px">Shelby Collier</div>
  <div class="av" style="top:481px;background:#c6d4ea;color:#1e3a78"><span style="transform:scaleX(.9)">JD</span></div>
  <div class="avg" style="top:560.3px"></div><div class="avn" style="top:561.300px">John Domenech</div>
  <div class="av" style="top:593px;background:#d4eef0;color:#2a7878"><span style="transform:scaleX(.965)">RN</span></div>
  <div class="avg" style="top:672.3px"></div><div class="avn" style="top:674.5px">read.ai meeting ...</div>
</div>
<div style="position:absolute;left:4px;top:700.400px;width:76.600px;height:16.400px;background:rgba(0,0,0,.56);border-radius:3px"></div>
<div style="position:absolute;left:9px;top:701.700px;color:#f4f4f4;font-weight:bold;font-size:10.4px;line-height:13px;white-space:nowrap;letter-spacing:-.15px">Shelby Collier</div>
</body>
</html>
